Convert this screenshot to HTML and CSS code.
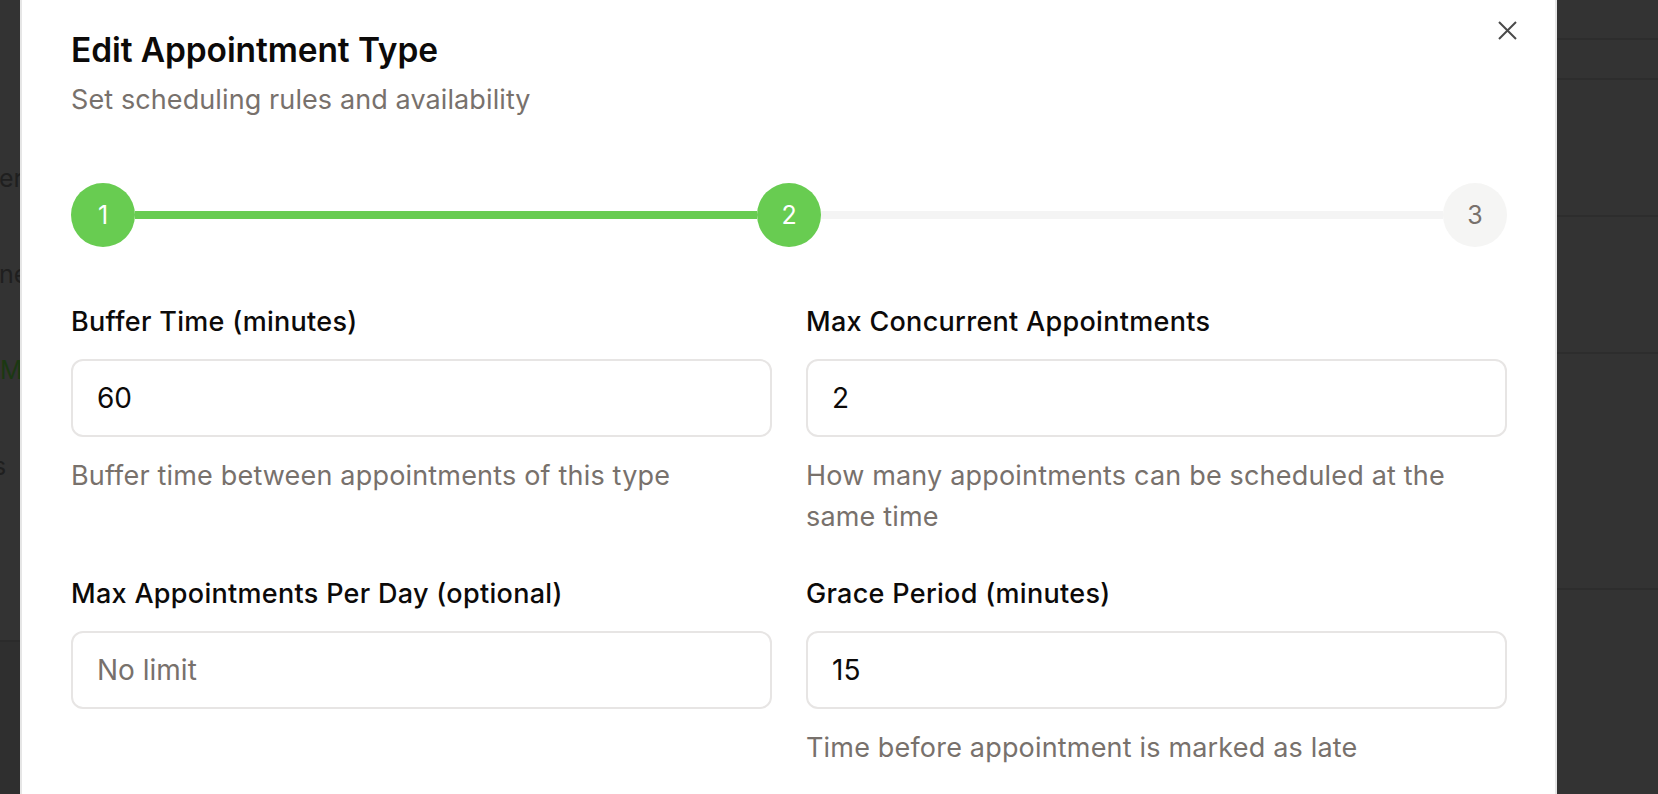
FILE: index.html
```html
<!DOCTYPE html>
<html lang="en">
<head>
<meta charset="utf-8">
<title>Edit Appointment Type</title>
<link rel="stylesheet" href="styles.css">
</head>
<body>
<div class="page">
  <div class="page-left">
    <div class="bg-row"><span class="bg-text">er</span></div>
    <div class="bg-row"><span class="bg-text">ne</span></div>
    <div class="bg-row"><span class="bg-text green">M</span></div>
    <div class="bg-row"><span class="bg-text cut">s</span></div>
    <div class="bg-foot"></div>
  </div>
  <div class="page-right">
    <div class="bg-line r1"></div>
    <div class="bg-line r2"></div>
    <div class="bg-line r3"></div>
    <div class="bg-line r4"></div>
    <div class="bg-line r5"></div>
    <div class="bg-line r6"></div>
  </div>
</div>

<div class="overlay">
  <div class="modal" role="dialog" aria-labelledby="dlg-title">
    <button class="close" type="button" aria-label="Close">
      <svg width="19" height="19" viewBox="0 0 19 19" fill="none" stroke="currentColor" stroke-width="2" stroke-linecap="butt">
        <path d="M1 1 L18 18 M18 1 L1 18"/>
      </svg>
    </button>

    <h2 class="title" id="dlg-title">Edit Appointment Type</h2>
    <p class="subtitle">Set scheduling rules and availability</p>

    <div class="stepper">
      <div class="step done">1</div>
      <div class="bar done"></div>
      <div class="step done">2</div>
      <div class="bar"></div>
      <div class="step">3</div>
    </div>

    <div class="fields">
      <div class="field">
        <label class="label" for="f-buffer">Buffer Time (minutes)</label>
        <input class="input" id="f-buffer" type="text" value="60">
        <p class="help">Buffer time between appointments of this type</p>
      </div>
      <div class="field">
        <label class="label" for="f-concurrent">Max Concurrent Appointments</label>
        <input class="input" id="f-concurrent" type="text" value="2">
        <p class="help">How many appointments can be scheduled at the same time</p>
      </div>
      <div class="field">
        <label class="label" for="f-perday">Max Appointments Per Day (optional)</label>
        <input class="input" id="f-perday" type="text" placeholder="No limit">
      </div>
      <div class="field">
        <label class="label" for="f-grace">Grace Period (minutes)</label>
        <input class="input" id="f-grace" type="text" value="15">
        <p class="help">Time before appointment is marked as late</p>
      </div>
    </div>
  </div>
</div>
</body>
</html>
```

FILE: styles.css
```css
* {
  box-sizing: border-box;
}

html,
body {
  margin: 0;
  height: 100%;
}

body {
  background: #333333;
  font-family: Inter, "Noto Sans", "Liberation Sans", sans-serif;
  overflow: hidden;
}

/* ---------- dimmed page behind the dialog ---------- */
.page {
  display: grid;
  grid-template-columns: 800px 1fr;
  height: 794px;
}

.page-left {
  display: flex;
  flex-direction: column;
  padding-top: 130px;
}

.bg-row {
  height: 96px;
  display: flex;
  align-items: center;
  font-size: 25px;
  color: #1f1f1f;
  white-space: nowrap;
}

.bg-text {
  margin-left: -1px;
}

.bg-text.green {
  color: #1b3812;
  margin-left: 0;
}

.bg-text.cut {
  margin-left: -7px;
}

.bg-foot {
  margin-top: 126px;
  flex: 1;
  border-top: 2px solid #2b2b2b;
  background: #2f2f2f;
}

.page-right {
  display: flex;
  flex-direction: column;
}

.bg-line {
  border-bottom: 2px solid #2d2d2d;
}

.r1 { height: 40px; }
.r2 { height: 40px; }
.r3 { height: 137px; }
.r4 { height: 137px; }
.r5 { height: 236px; }
.r6 { flex: 1; border-bottom: 0; }

/* ---------- dialog ---------- */
.overlay {
  position: fixed;
  inset: 0;
}

.modal {
  position: absolute;
  left: 20px;
  top: -24px;
  width: 1537px;
  height: 880px;
  background: #ffffff;
  border: 2px solid #e6e6e6;
  border-radius: 16px;
  padding: 52px 48px 0 49px;
}

.close {
  position: absolute;
  top: 43px;
  right: 38px;
  width: 19px;
  height: 19px;
  padding: 0;
  border: 0;
  background: none;
  color: #4a4a4a;
  display: flex;
}

.title {
  margin: 0;
  font-size: 33.5px;
  line-height: 40px;
  font-weight: 600;
  color: #0c0a09;
  letter-spacing: -0.1px;
}

.subtitle {
  margin: 14px 0 0;
  font-size: 27px;
  line-height: 32px;
  letter-spacing: 0.1px;
  color: #78716c;
}

/* stepper */
.stepper {
  margin-top: 67px;
  display: flex;
  align-items: center;
}

.step {
  flex: none;
  width: 64px;
  height: 64px;
  border-radius: 50%;
  display: flex;
  align-items: center;
  justify-content: center;
  font-size: 25px;
  background: #f5f5f4;
  color: #78716c;
}

.step.done {
  background: #68cc51;
  color: #ffffff;
}

.bar {
  flex: 1;
  height: 8px;
  background: #f4f4f4;
}

.bar.done {
  background: #68cc51;
}

/* fields */
.fields {
  margin-top: 59px;
  display: grid;
  grid-template-columns: 1fr 1fr;
  column-gap: 34px;
  row-gap: 41px;
}

.field {
  display: flex;
  flex-direction: column;
}

.label {
  font-size: 27px;
  line-height: 32px;
  font-weight: 500;
  letter-spacing: 0.3px;
  color: #0c0a09;
  margin-bottom: 21px;
}

.input {
  height: 78px;
  width: 100%;
  border: 2px solid #e7e5e4;
  border-radius: 12px;
  padding: 0 24px;
  font-family: Inter, "Noto Sans", "Liberation Sans", sans-serif;
  font-size: 28px;
  color: #0c0a09;
  background: #ffffff;
  outline: none;
}

.input::placeholder {
  color: #78716c;
  opacity: 1;
}

.help {
  margin: 18px 0 0;
  font-size: 27px;
  line-height: 41px;
  letter-spacing: 0.18px;
  color: #78716c;
}
```
